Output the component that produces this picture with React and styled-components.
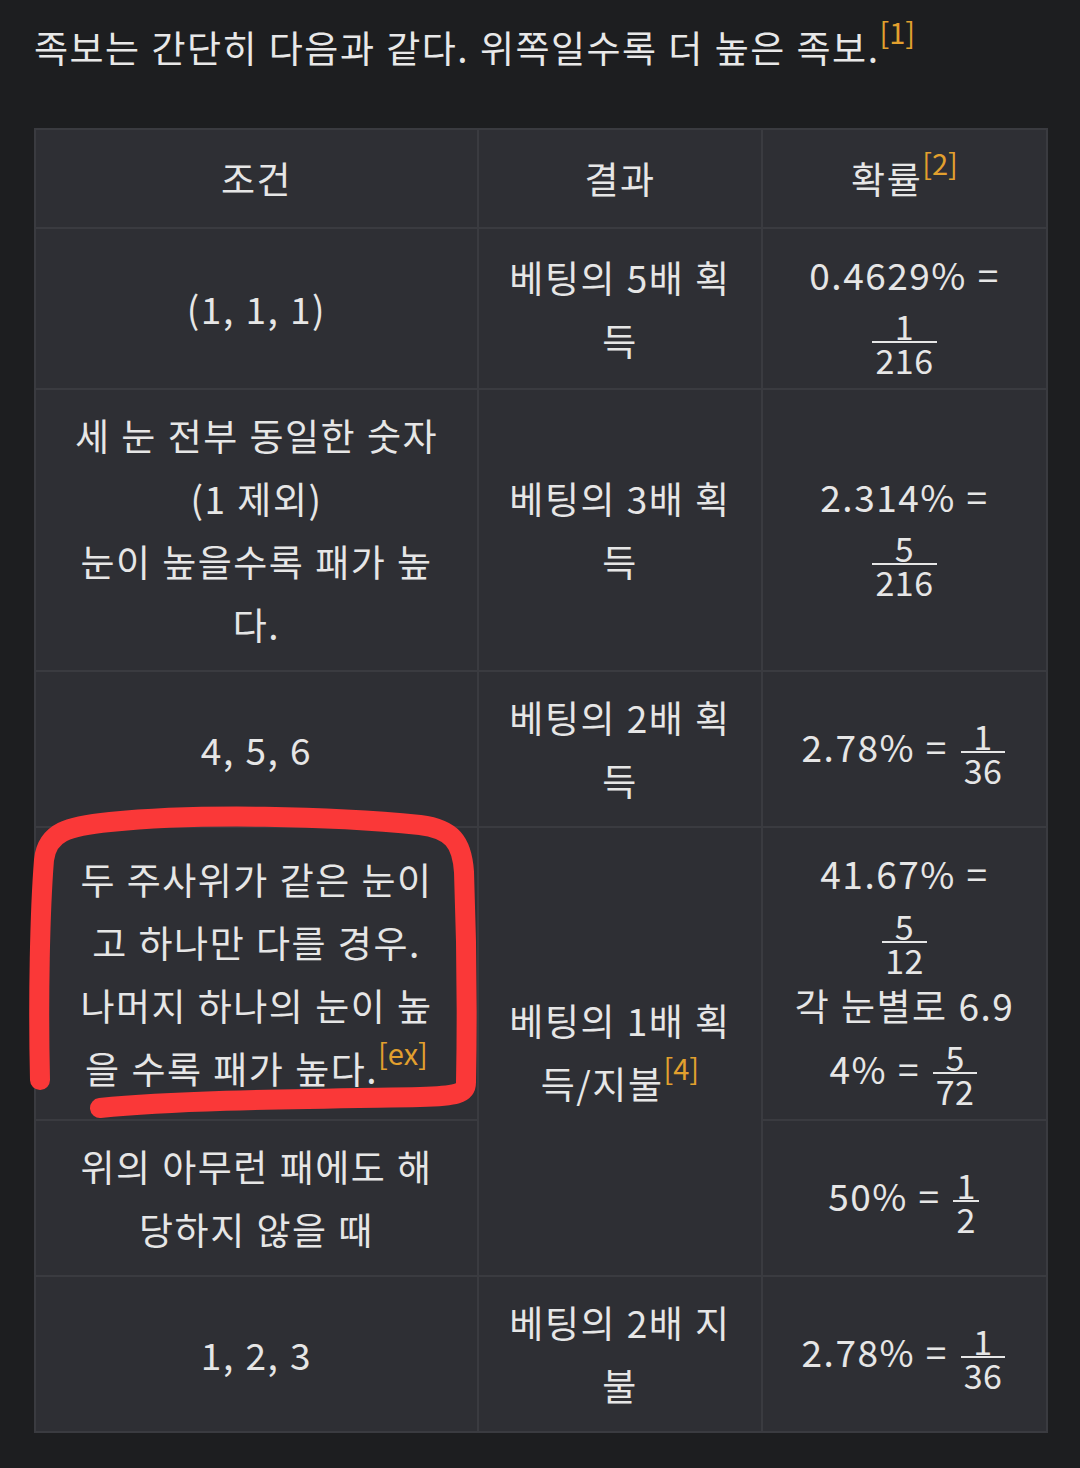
import React from 'react';
import styled, { createGlobalStyle } from 'styled-components';

const GlobalStyle = createGlobalStyle`
  html, body {
    margin: 0;
    padding: 0;
    background: #1d1e20;
  }
  body {
    font-family: "Noto Sans CJK KR", "Noto Sans", sans-serif;
    color: #e6e6e6;
  }
`;

const Page = styled.div`
  position: relative;
  width: 1080px;
  min-height: 1468px;
  box-sizing: border-box;
  padding: 16px 34px 0 34px;
`;

const Intro = styled.p`
  margin: 0 0 49px 0;
  font-size: 37px;
  line-height: 63px;
  letter-spacing: 1.5px;
  word-spacing: 1px;
  color: #e8e8e8;
  white-space: nowrap;
`;

const Ref = styled.sup`
  color: #e2a02e;
  font-size: 29px;
  line-height: 0;
  letter-spacing: 0;
  vertical-align: 0.65em;
`;

const Table = styled.table`
  width: 1012px;
  table-layout: fixed;
  border-collapse: collapse;
  background: #2e2f34;
  border: 2px solid #3c3d42;
`;

const cellRules = `
  border: 2px solid #3a3b40;
  font-size: 37px;
  font-weight: 400;
  line-height: 63px;
  letter-spacing: 1.5px;
  word-spacing: 1px;
  text-align: center;
  vertical-align: middle;
  word-break: break-all;
  color: #e6e6e6;
`;

const Th = styled.th`
  ${cellRules}
  padding: 17px 30px;
`;

// condition column is a little narrower inside than the others
const Td = styled.td`
  ${cellRules}
  padding: 14px ${p => (p.$cond ? '38px' : '30px')};
`;

const Frac = styled.span`
  display: inline-block;
  vertical-align: middle;
  text-align: center;
  font-size: 34px;
  line-height: 29px;
  letter-spacing: 0.5px;
  margin: 0 2px;
`;

const Num = styled.span`
  display: block;
  padding: 0 3px 1px;
  border-bottom: 2px solid #e6e6e6;
`;

const Den = styled.span`
  display: block;
  padding: 2px 3px 0;
`;

const Scribble = styled.svg`
  position: absolute;
  left: 0;
  top: 0;
  width: 1080px;
  height: 1468px;
  pointer-events: none;
`;

function Fraction({ n, d }) {
  return (
    <Frac>
      <Num>{n}</Num>
      <Den>{d}</Den>
    </Frac>
  );
}

export default function App() {
  return (
    <Page>
      <GlobalStyle />
      <Intro>
        족보는 간단히 다음과 같다. 위쪽일수록 더 높은 족보.<Ref>[1]</Ref>
      </Intro>
      <Table>
        <colgroup>
          <col style={{ width: 443 }} />
          <col style={{ width: 284 }} />
          <col style={{ width: 285 }} />
        </colgroup>
        <thead>
          <tr>
            <Th>조건</Th>
            <Th>결과</Th>
            <Th>확률<Ref>[2]</Ref></Th>
          </tr>
        </thead>
        <tbody>
          <tr>
            <Td $cond>(1, 1, 1)</Td>
            <Td>베팅의 5배 획득</Td>
            <Td>0.4629% = <Fraction n="1" d="216" /></Td>
          </tr>
          <tr>
            <Td $cond>세 눈 전부 동일한 숫자<br />(1 제외)<br />눈이 높을수록 패가 높다.</Td>
            <Td>베팅의 3배 획득</Td>
            <Td>2.314% = <Fraction n="5" d="216" /></Td>
          </tr>
          <tr>
            <Td $cond>4, 5, 6</Td>
            <Td>베팅의 2배 획득</Td>
            <Td>2.78% = <Fraction n="1" d="36" /></Td>
          </tr>
          <tr>
            <Td $cond>두 주사위가 같은 눈이고 하나만 다를 경우. 나머지 하나의 눈이 높을 수록 패가 높다.<Ref>[ex]</Ref></Td>
            <Td rowSpan={2}>베팅의 1배 획득/지불<Ref>[4]</Ref></Td>
            <Td>41.67% = <Fraction n="5" d="12" /><br />각 눈별로 6.94% = <Fraction n="5" d="72" /></Td>
          </tr>
          <tr>
            <Td $cond>위의 아무런 패에도 해당하지 않을 때</Td>
            <Td>50% = <Fraction n="1" d="2" /></Td>
          </tr>
          <tr>
            <Td $cond>1, 2, 3</Td>
            <Td>베팅의 2배 지불</Td>
            <Td>2.78% = <Fraction n="1" d="36" /></Td>
          </tr>
        </tbody>
      </Table>
      <Scribble viewBox="0 0 1080 1468">
        <path
          d="M40 1080 C38 1000 40 910 44 860 C47 832 68 826 110 822 C200 813 330 816 420 825 C452 829 462 842 464 872 C467 950 467 1030 466 1082 C466 1094 456 1096 420 1097 C300 1099 180 1100 100 1108"
          fill="none"
          stroke="#fa3838"
          strokeWidth="20"
          strokeLinecap="round"
          strokeLinejoin="round"
        />
      </Scribble>
    </Page>
  );
}
